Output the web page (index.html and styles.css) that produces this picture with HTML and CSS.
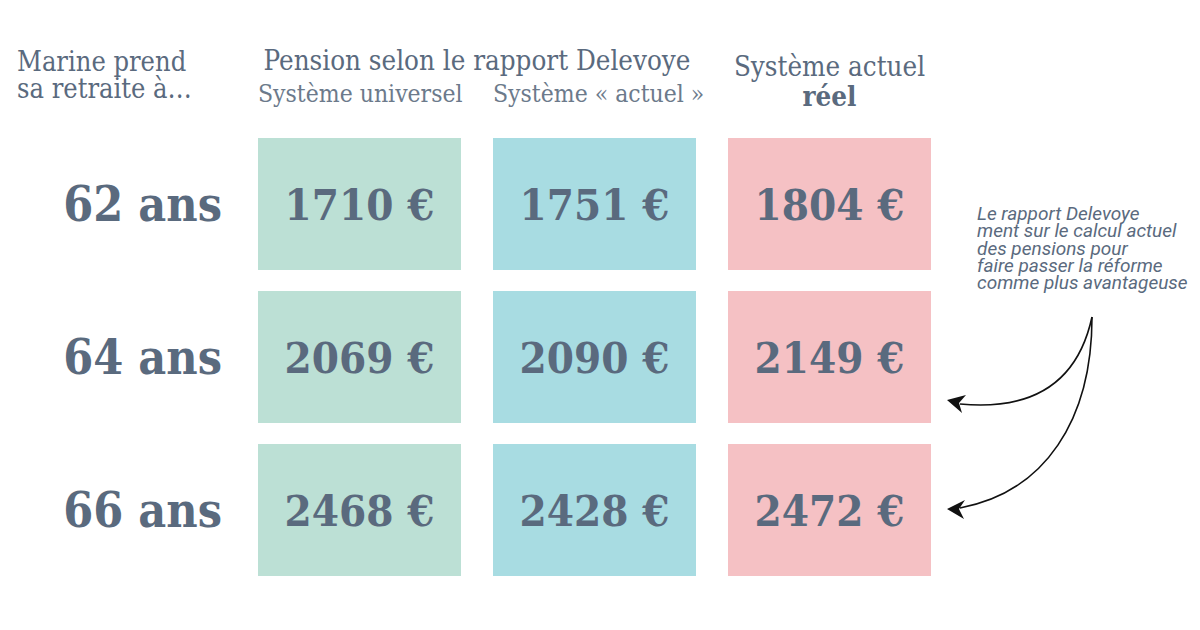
FILE: index.html
```html
<!DOCTYPE html>
<html lang="fr">
<head>
<meta charset="utf-8">
<title>Pension selon le rapport Delevoye</title>
<link rel="stylesheet" href="styles.css">
</head>
<body>
<div class="page">
  <div class="grid">
    <div class="intro">Marine prend<br>sa retraite à…</div>
    <div class="head-group">
      <div class="head-title">Pension selon le rapport Delevoye</div>
      <div class="head-subs">
        <span>Système universel</span>
        <span>Système « actuel »</span>
      </div>
    </div>
    <div class="head-real">Système actuel<br><b>réel</b></div>

    <div class="age r2">62 ans</div>
    <div class="cell green r2">1710 €</div>
    <div class="cell cyan r2">1751 €</div>
    <div class="cell pink r2">1804 €</div>

    <div class="age r3">64 ans</div>
    <div class="cell green r3">2069 €</div>
    <div class="cell cyan r3">2090 €</div>
    <div class="cell pink r3">2149 €</div>

    <div class="age r4">66 ans</div>
    <div class="cell green r4">2468 €</div>
    <div class="cell cyan r4">2428 €</div>
    <div class="cell pink r4">2472 €</div>

    <div class="note">Le rapport Delevoye<br>ment sur le calcul actuel<br>des pensions pour<br>faire passer la réforme<br>comme plus avantageuse</div>
  </div>
  <svg class="arrows" width="1200" height="630" viewBox="0 0 1200 630">
    <path d="M1092,317 C1080,372 1045,412 960,404" fill="none" stroke="#111" stroke-width="1.6"/>
    <path d="M1092,317 C1092,420 1045,492 960,508" fill="none" stroke="#111" stroke-width="1.6"/>
    <polygon points="947,400 966,395 959,403 962,413" fill="#111"/>
    <polygon points="947,509 965,500 959,509 964,519" fill="#111"/>
  </svg>
</div>
</body>
</html>
```

FILE: styles.css
```css
html, body {
  margin: 0;
  padding: 0;
  background: #ffffff;
}

.page {
  position: relative;
  width: 1200px;
  height: 630px;
  overflow: hidden;
  color: #5a6a7e;
  font-family: "DejaVu Serif", "Liberation Serif", serif;
}

.grid {
  display: grid;
  grid-template-columns: 226px 203px 203px 203px 1fr;
  grid-template-rows: 117px 132px 132px 132px;
  column-gap: 32px;
  row-gap: 21px;
}

.intro {
  grid-column: 1;
  grid-row: 1;
  padding: 48px 0 0 17px;
  font-size: 27px;
  line-height: 27px;
  font-stretch: condensed;
  white-space: nowrap;
}

.head-group {
  grid-column: 2 / 4;
  grid-row: 1;
  display: flex;
  flex-direction: column;
  align-items: center;
  padding-top: 45px;
}

.head-title {
  font-size: 27.5px;
  line-height: 30px;
  font-stretch: condensed;
  white-space: nowrap;
}

.head-subs {
  display: grid;
  grid-template-columns: 203px 203px;
  column-gap: 32px;
  width: 100%;
  margin-top: 5px;
  text-align: center;
  font-size: 24.5px;
  line-height: 28px;
  font-stretch: condensed;
  color: #6c7a8b;
  white-space: nowrap;
}

.head-real {
  grid-column: 4;
  grid-row: 1;
  text-align: center;
  padding-top: 51px;
  font-size: 27.5px;
  line-height: 30px;
  font-stretch: condensed;
  white-space: nowrap;
}

.head-real b {
  font-weight: 700;
}

.r2 { grid-row: 2; }
.r3 { grid-row: 3; }
.r4 { grid-row: 4; }

.age {
  grid-column: 1;
  display: flex;
  align-items: center;
  justify-content: flex-end;
  padding-right: 4px;
  font-size: 48px;
  font-weight: 700;
  font-stretch: condensed;
}

.cell {
  display: flex;
  align-items: center;
  justify-content: center;
  font-size: 43.5px;
  font-weight: 700;
  font-stretch: condensed;
}

.green { grid-column: 2; background: #bce0d5; }
.cyan  { grid-column: 3; background: #a8dce2; }
.pink  { grid-column: 4; background: #f5c1c4; }

.note {
  grid-column: 5;
  grid-row: 2 / 5;
  padding: 67px 0 0 14px;
  font-family: Roboto, "Noto Sans", sans-serif;
  font-style: italic;
  font-size: 19px;
  line-height: 17.3px;
  white-space: nowrap;
}

.arrows {
  position: absolute;
  left: 0;
  top: 0;
  pointer-events: none;
}
```
